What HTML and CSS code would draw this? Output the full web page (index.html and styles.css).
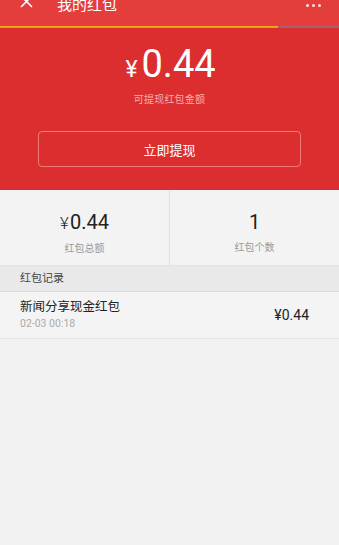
FILE: index.html
```html
<!DOCTYPE html>
<html lang="zh-CN">
<head>
    <meta charset="UTF-8">
    <meta name="viewport" content="width=device-width, initial-scale=1.0">
    <title>我的红包</title>
    <link rel="stylesheet" href="styles.css">
</head>
<body>
    <div class="top-bar">
        <span class="close-icon">
            <svg width="13" height="13" viewBox="0 0 13 13">
                <path d="M1 -4 L12 7 M12 -4 L1 7" stroke="#fff" stroke-width="1.6" fill="none"/>
            </svg>
        </span>
        <span class="page-title">我的红包</span>
        <span class="more">
            <i></i><i></i><i></i>
        </span>
    </div>
    <div class="progress">
        <div class="progress-done"></div>
    </div>

    <div class="balance">
        <div class="amount"><span class="yen">¥</span>0.44</div>
        <div class="amount-label">可提现红包金额</div>
        <button class="withdraw-button">立即提现</button>
    </div>

    <div class="stats">
        <div class="stat">
            <div class="stat-value"><span class="stat-yen">¥</span>0.44</div>
            <div class="stat-label">红包总额</div>
        </div>
        <div class="stat">
            <div class="stat-value">1</div>
            <div class="stat-label">红包个数</div>
        </div>
    </div>

    <div class="section-title">红包记录</div>
    <div class="record">
        <div class="record-info">
            <div class="record-name">新闻分享现金红包</div>
            <div class="record-time">02-03 00:18</div>
        </div>
        <div class="record-amount">¥0.44</div>
    </div>
</body>
</html>
```

FILE: styles.css
```css
body {
    font-family: Roboto, "Noto Sans CJK SC", sans-serif;
    margin: 0;
    background-color: #f2f2f2;
    height: 545px;
    overflow: hidden;
}

.top-bar {
    height: 26px;
    background-color: #e33d3c;
    display: flex;
    align-items: flex-start;
    color: white;
}

.close-icon {
    margin-left: 20px;
    width: 13px;
    height: 9px;
    overflow: hidden;
}

.close-icon svg {
    display: block;
}

.page-title {
    margin-left: 24px;
    margin-top: -5px;
    font-size: 15px;
    line-height: 20px;
}

.more {
    margin-left: auto;
    margin-right: 18px;
    margin-top: 4px;
    display: flex;
    gap: 3px;
}

.more i {
    width: 3px;
    height: 3px;
    border-radius: 50%;
    background-color: #fbe3e3;
}

.progress {
    height: 2px;
    background-color: #a5616a;
}

.progress-done {
    width: 278px;
    height: 2px;
    background: linear-gradient(#f5b61e, #f08a1a);
}

.balance {
    background-color: #dc2e2f;
    height: 162px;
    display: flex;
    flex-direction: column;
    align-items: center;
    color: white;
}

.amount {
    margin-top: 14px;
    font-size: 38px;
    line-height: 44px;
    margin-left: 2px;
}

.yen {
    font-size: 23px;
    margin-right: 4px;
}

.amount-label {
    font-size: 10px;
    line-height: 14px;
    margin-top: 1px;
    color: #f5b0b0;
    letter-spacing: 0.2px;
}

.withdraw-button {
    margin-top: 24px;
    width: 263px;
    height: 36px;
    background-color: transparent;
    border: 1px solid #f07a78;
    border-radius: 4px;
    color: white;
    font-family: inherit;
    font-size: 13px;
    padding: 0;
}

.stats {
    display: flex;
    height: 75px;
    background-color: #f3f3f3;
    border-bottom: 1px solid #e2e2e2;
}

.stat {
    flex: 1;
    display: flex;
    flex-direction: column;
    align-items: center;
    padding-top: 19px;
}

.stat + .stat {
    border-left: 1px solid #e2e2e2;
}

.stat-value {
    font-size: 20px;
    line-height: 26px;
    color: #222;
}

.stat-yen {
    font-size: 17px;
    font-weight: 300;
    margin-right: 1px;
}

.stat-label {
    font-size: 10px;
    line-height: 14px;
    margin-top: 6px;
    color: #999;
}

.section-title {
    height: 25px;
    line-height: 25px;
    background-color: #e9e9e9;
    padding-left: 20px;
    font-size: 11px;
    color: #444;
    border-bottom: 1px solid #dcdcdc;
}

.record {
    display: flex;
    align-items: center;
    height: 46px;
    padding: 0 30px 0 20px;
    background-color: #f4f4f4;
    border-bottom: 1px solid #e4e4e4;
}

.record-name {
    font-size: 12.5px;
    line-height: 16px;
    color: #222;
}

.record-time {
    font-size: 10.5px;
    line-height: 14px;
    margin-top: 2px;
    color: #aaa;
}

.record-amount {
    margin-left: auto;
    font-size: 14px;
    color: #222;
}
```
